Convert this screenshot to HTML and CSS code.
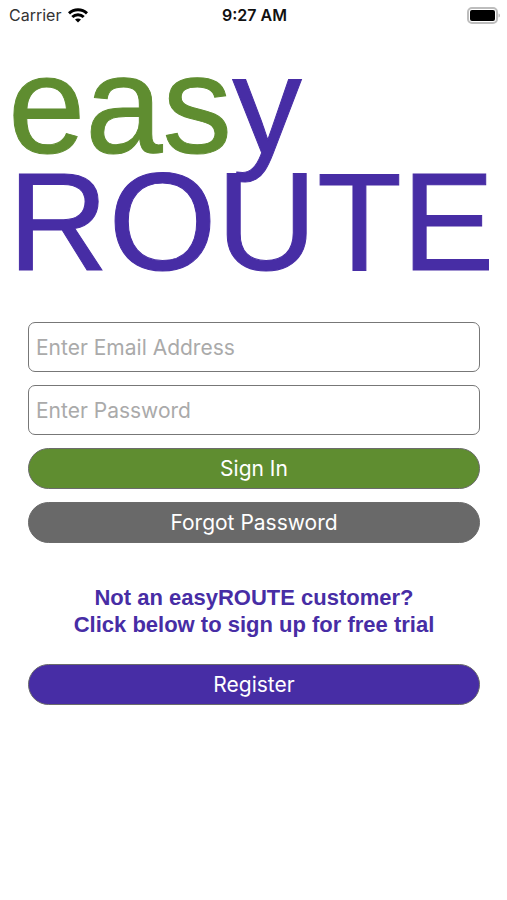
FILE: index.html
```html
<!DOCTYPE html>
<html lang="en">
<head>
    <meta charset="UTF-8">
    <meta name="viewport" content="width=device-width, initial-scale=1.0">
    <title>easyROUTE</title>
    <link rel="stylesheet" href="styles.css">
</head>
<body>
    <header class="status-bar">
        <div class="carrier">
            <span>Carrier</span>
            <svg width="20" height="15" viewBox="0 0 20 15" fill="none" stroke="#000" stroke-width="3">
                <path d="M1 5.3C6 .6 14 .6 19 5.3"/>
                <path d="M4.3 9C7.5 5.9 12.5 5.9 15.7 9"/>
                <path d="M10 14.5L7 11.5C8.5 10 11.5 10 13 11.5Z" fill="#000" stroke="none"/>
            </svg>
        </div>
        <time class="clock">9:27 AM</time>
        <div class="battery">
            <svg width="33" height="17" viewBox="0 0 33 17">
                <rect x="1" y="1" width="29" height="15" rx="4" fill="none" stroke="#bdbdbd" stroke-width="2"/>
                <rect x="3" y="3" width="25" height="11" rx="2" fill="#000"/>
                <path d="M31.500 6.500c2 .6 2 3.400 0 4z" fill="#bdbdbd"/>
            </svg>
        </div>
    </header>
    <main>
        <h1 class="logo"><span class="green">eas</span>y<br>ROUTE</h1>
        <form class="login">
            <input type="email" id="email" placeholder="Enter Email Address" aria-label="Email Address">
            <input type="password" id="password" placeholder="Enter Password" aria-label="Password">
            <button type="submit" class="sign-in">Sign In</button>
            <button type="button" class="forgot">Forgot Password</button>
            <p class="trial">Not an easyROUTE customer?<br>Click below to sign up for free trial</p>
            <button type="button" class="register">Register</button>
        </form>
    </main>
</body>
</html>
```
FILE: styles.css
```css
* {
    box-sizing: border-box;
}
body {
    margin: 0;
    background-color: #fff;
    font-family: Inter, "Liberation Sans", sans-serif;
}
.status-bar {
    display: grid;
    grid-template-columns: 1fr auto 1fr;
    align-items: center;
    height: 30px;
    padding: 0 7px 0 9px;
    font-size: 16px;
    color: #111;
}
.carrier {
    display: flex;
    align-items: center;
    gap: 7px;
    color: #333;
}
.clock {
    font-weight: 600;
}
.battery {
    display: flex;
    justify-content: flex-end;
}
.logo {
    margin: 16px 0 0;
    padding-left: 8px;
    font-family: "Liberation Sans", Arial, sans-serif;
    font-size: 139px;
    font-weight: normal;
    line-height: 117px;
    white-space: nowrap;
    color: #472da5;
    -webkit-text-stroke: 1px currentColor;
}
.logo .green {
    color: #5f8d30;
}
.login {
    display: flex;
    flex-direction: column;
    gap: 13px;
    padding: 42px 27px 27px 28px;
}
.login input {
    width: 100%;
    height: 50px;
    padding: 0 7px;
    border: 1px solid #777;
    border-radius: 7px;
    font-family: inherit;
    font-size: 21px;
    color: #333;
}
.login input::placeholder {
    color: #aaa;
}
.login button {
    height: 41px;
    padding: 0;
    border: 1px solid #6b6b6b;
    border-radius: 21px;
    font-family: inherit;
    font-size: 21px;
    color: #fff;
    cursor: pointer;
}
.login .sign-in {
    background-color: #5f8d30;
}
.login .forgot {
    background-color: #696969;
}
.login .register {
    background-color: #472da5;
}
.trial {
    margin: 28px 0 13px;
    font-family: "Liberation Sans", Arial, sans-serif;
    font-size: 22px;
    font-weight: bold;
    line-height: 27px;
    text-align: center;
    color: #472da5;
}
```
